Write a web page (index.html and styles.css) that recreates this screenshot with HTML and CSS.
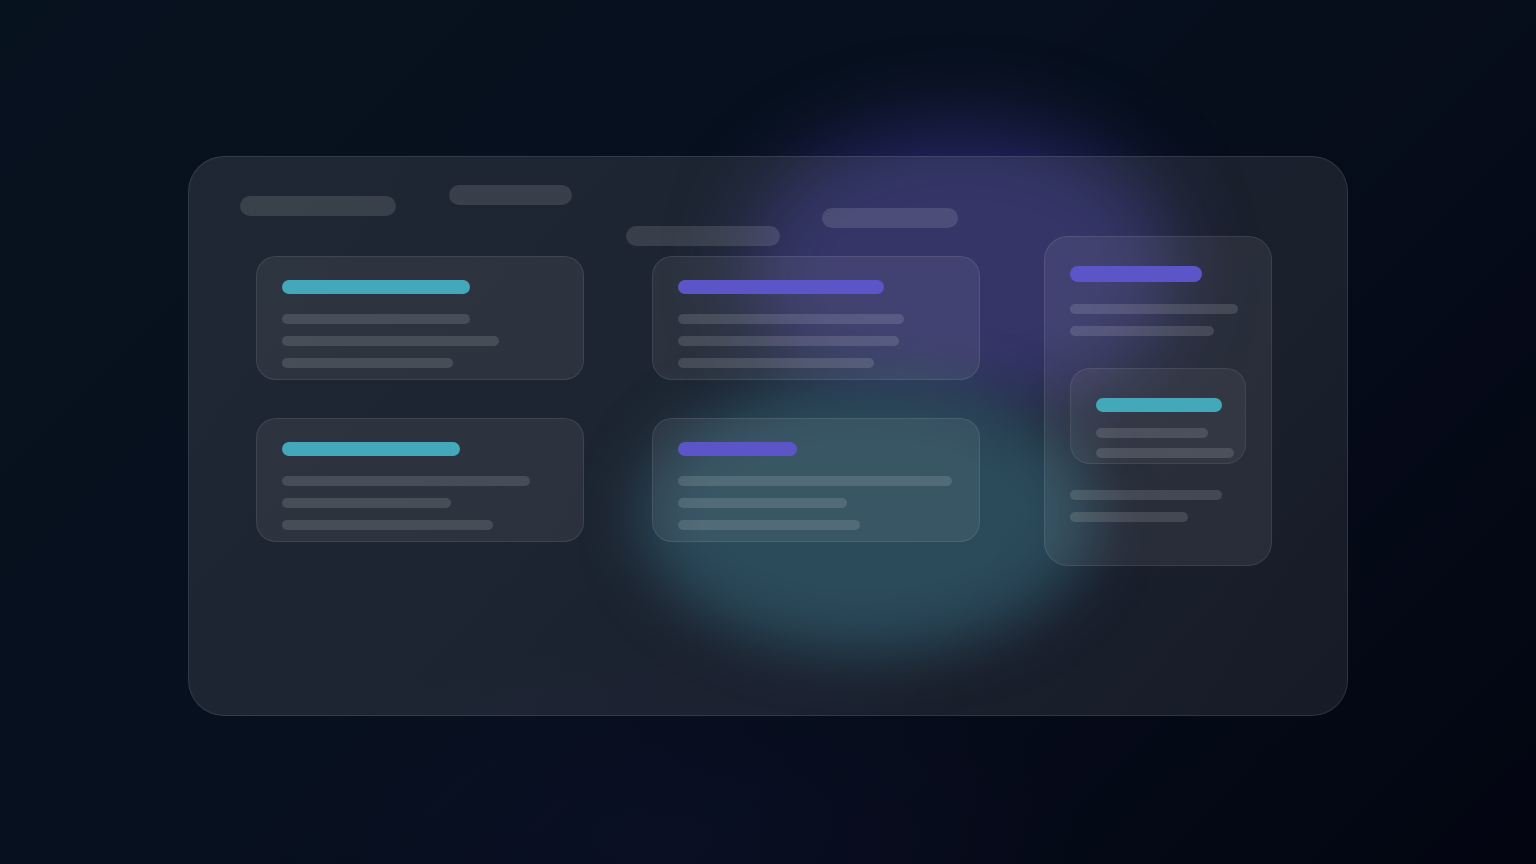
FILE: index.html
```html
<!DOCTYPE html>
<html lang="en">
<head>
<meta charset="utf-8">
<title>Glass dashboard</title>
<link rel="stylesheet" href="styles.css">
</head>
<body>
  <div class="blob blob-purple"></div>
  <div class="blob blob-teal"></div>

  <main class="panel">
    <header class="panel-head">
      <span class="pill pill-a"></span>
      <span class="pill pill-b"></span>
      <span class="pill pill-c"></span>
      <span class="pill pill-d"></span>
    </header>

    <section class="panel-body">
      <div class="card-grid">
        <article class="card">
          <div class="bar bar-cyan" style="width:188px"></div>
          <div class="line" style="width:188px"></div>
          <div class="line" style="width:217px"></div>
          <div class="line" style="width:171px"></div>
        </article>
        <article class="card">
          <div class="bar bar-purple" style="width:206px"></div>
          <div class="line" style="width:226px"></div>
          <div class="line" style="width:221px"></div>
          <div class="line" style="width:196px"></div>
        </article>
        <article class="card">
          <div class="bar bar-cyan" style="width:178px"></div>
          <div class="line" style="width:248px"></div>
          <div class="line" style="width:169px"></div>
          <div class="line" style="width:211px"></div>
        </article>
        <article class="card">
          <div class="bar bar-purple" style="width:119px"></div>
          <div class="line" style="width:274px"></div>
          <div class="line" style="width:169px"></div>
          <div class="line" style="width:182px"></div>
        </article>
      </div>

      <aside class="side-card">
        <div class="bar bar-purple bar-lg" style="width:132px"></div>
        <div class="line" style="width:168px"></div>
        <div class="line" style="width:144px"></div>

        <div class="inner-card">
          <div class="bar bar-cyan" style="width:126px"></div>
          <div class="line line-tight" style="width:112px"></div>
          <div class="line line-tight" style="width:138px"></div>
        </div>

        <div class="line" style="width:152px"></div>
        <div class="line" style="width:118px"></div>
      </aside>
    </section>
  </main>
</body>
</html>
```

FILE: styles.css
```css
html, body {
  margin: 0;
  padding: 0;
}

body {
  position: relative;
  width: 1536px;
  height: 864px;
  overflow: hidden;
  font-family: "Inter", "Liberation Sans", sans-serif;
  background:
    radial-gradient(ellipse 420px 200px at 660px 840px, rgba(20, 22, 58, 0.3), rgba(20, 22, 58, 0) 100%),
    linear-gradient(135deg, #07121f 0%, #07101e 45%, #050a18 75%, #030611 100%);
  box-sizing: border-box;
  padding-top: 156px;
}

/* decorative glow blobs behind the glass panel */
.blob {
  position: absolute;
  border-radius: 50%;
  pointer-events: none;
}

.blob-purple {
  left: 745px;
  top: 122px;
  width: 430px;
  height: 296px;
  background: #22235a;
  filter: blur(38px);
}

.blob-teal {
  left: 640px;
  top: 378px;
  width: 455px;
  height: 275px;
  background: #17394b;
  filter: blur(28px);
}

/* glass panel */
.panel {
  position: relative;
  z-index: 1;
  width: 1160px;
  height: 560px;
  margin: 0 auto;
  box-sizing: border-box;
  border-radius: 36px;
  border: 1px solid rgba(255, 255, 255, 0.1);
  background: linear-gradient(120deg, rgba(255, 255, 255, 0.095) 0%, rgba(255, 255, 255, 0.085) 60%, rgba(255, 255, 255, 0.08) 100%);
  display: flex;
  flex-direction: column;
}

.panel-head {
  height: 79px;
  display: flex;
  align-items: flex-start;
}

.pill {
  display: block;
  height: 20px;
  border-radius: 10px;
  background: rgba(255, 255, 255, 0.12);
  flex: none;
}

.pill-a { width: 156px; margin: 39px 0 0 51px; }
.pill-b { width: 123px; margin: 28px 0 0 53px; }
.pill-c { width: 154px; margin: 69px 0 0 54px; }
.pill-d { width: 136px; margin: 51px 0 0 42px; }

.panel-body {
  display: flex;
  align-items: flex-start;
  padding-left: 67px;
}

.card-grid {
  margin-top: 20px;
  display: grid;
  grid-template-columns: 328px 328px;
  grid-auto-rows: 124px;
  column-gap: 68px;
  row-gap: 38px;
}

.card {
  box-sizing: border-box;
  padding: 23px 25px 0;
  border-radius: 20px;
  border: 1px solid rgba(255, 255, 255, 0.09);
  background: rgba(255, 255, 255, 0.065);
}

.bar {
  height: 14px;
  border-radius: 7px;
  margin-bottom: 20px;
}

.bar-lg {
  height: 16px;
  border-radius: 8px;
  margin-bottom: 22px;
}

.bar-cyan { background: #42a8ba; }
.bar-purple { background: #5b55c8; }

.line {
  height: 10px;
  border-radius: 5px;
  background: rgba(255, 255, 255, 0.13);
  margin-bottom: 12px;
}

.line-tight {
  margin-bottom: 10px;
}

.side-card {
  box-sizing: border-box;
  width: 228px;
  height: 330px;
  margin-left: 64px;
  padding: 29px 25px 0;
  border-radius: 24px;
  border: 1px solid rgba(255, 255, 255, 0.09);
  background: rgba(255, 255, 255, 0.065);
}

.inner-card {
  box-sizing: border-box;
  width: 176px;
  height: 96px;
  margin: 32px 0 26px;
  padding: 29px 25px 0;
  border-radius: 20px;
  border: 1px solid rgba(255, 255, 255, 0.08);
  background: rgba(255, 255, 255, 0.05);
}

.inner-card .bar {
  margin-bottom: 16px;
}
```
